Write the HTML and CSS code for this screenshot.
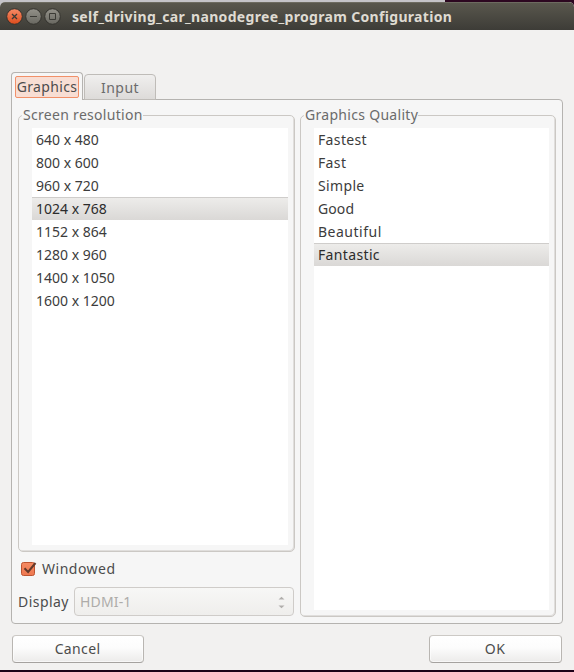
FILE: index.html
```html
<!DOCTYPE html>
<html lang="en">
<head>
<meta charset="utf-8">
<title>self_driving_car_nanodegree_program Configuration</title>
<link rel="stylesheet" href="styles.css">
</head>
<body>
<div class="desktop">
<main class="window">
  <header class="titlebar">
    <svg class="controls" width="56" height="18" viewBox="0 0 56 18">
      <defs>
        <linearGradient id="close" x2="0" y2="1"><stop stop-color="#f78c68"/><stop offset="1" stop-color="#dc4b1b"/></linearGradient>
        <linearGradient id="gray" x2="0" y2="1"><stop stop-color="#94928a"/><stop offset="1" stop-color="#686760"/></linearGradient>
      </defs>
      <g stroke="#34332e">
        <circle cx="8.5" cy="8.5" r="7.8" fill="url(#close)"/>
        <circle cx="27.5" cy="8.5" r="7.8" fill="url(#gray)"/>
        <circle cx="46.5" cy="8.5" r="7.8" fill="url(#gray)"/>
      </g>
      <g fill="none" stroke="#3b3a35">
        <path d="M6 6l5 5M11 6l-5 5" stroke-width="1.3"/>
        <path d="M24 8.5h7M43.5 5.5h6v6h-6z"/>
      </g>
    </svg>
    <h1 class="title">self_driving_car_nanodegree_program Configuration</h1>
  </header>
  <nav class="tabs">
    <div class="tab active"><span class="focus">Graphics</span></div>
    <div class="tab">Input</div>
  </nav>
  <section class="panel">
    <div class="column">
      <div class="group">
        <h2 class="legend">Screen resolution</h2>
        <ul class="list">
          <li>640 x 480</li><li>800 x 600</li><li>960 x 720</li><li class="selected">1024 x 768</li>
          <li>1152 x 864</li><li>1280 x 960</li><li>1400 x 1050</li><li>1600 x 1200</li>
        </ul>
      </div>
      <label class="check">
        <svg width="18" height="18" viewBox="0 0 18 18">
          <defs><linearGradient id="box" x2="0" y2="1"><stop stop-color="#f58a62"/><stop offset="1" stop-color="#ee7850"/></linearGradient></defs>
          <rect x="1.5" y="2.5" width="13" height="13" rx="2" fill="url(#box)" stroke="#bd5431"/>
          <path d="M4.5 8.2l3.6 3.7L15.5 3" fill="none" stroke="#63392b" stroke-width="2"/>
        </svg>
        <span class="check-label">Windowed</span>
      </label>
      <div class="display">
        <span class="display-label">Display</span>
        <div class="combo"><span>HDMI-1</span>
          <svg width="7" height="13" viewBox="0 0 7 13"><path d="M.5 3.5l3-2.8 3 2.8zM.5 9.5h6l-3 2.8z" fill="#b0aeab"/></svg>
        </div>
      </div>
    </div>
    <div class="group quality">
      <h2 class="legend">Graphics Quality</h2>
      <ul class="list words">
        <li>Fastest</li><li>Fast</li><li>Simple</li><li class="tight">Good</li><li class="loose">Beautiful</li><li class="selected">Fantastic</li>
      </ul>
    </div>
  </section>
  <footer class="actions">
    <button class="button">Cancel</button>
    <button class="button ok">OK</button>
  </footer>
</main>
</div>
</body>
</html>
```

FILE: styles.css
```css
* { box-sizing: border-box; }
body { margin: 0; font: 14px/20px "Noto Sans", "Open Sans", sans-serif; color: #4c4c4c; }
h1, h2, ul { margin: 0; padding: 0; font-weight: normal; font-size: inherit; list-style: none; }
span, li, h1 { white-space: nowrap; }
.desktop { height: 672px; padding: 2px 0; overflow: hidden; background: linear-gradient(#1d0018, #1d0018) 0 100% / 100% 2px no-repeat, linear-gradient(90deg, #c5c4c8 445px, #2c0720 445px); }
.window { height: 668px; border-radius: 5px 5px 0 0; background: #f2f1f0; overflow: hidden; }
.titlebar { height: 28px; padding-left: 6px; display: flex; align-items: center; background: linear-gradient(#59574d, #3d3c37); border-top: 1px solid #6d6b60; }
.controls { flex: none; margin-top: 1px; }
.title { margin-left: 10px; font-size: 14px; font-weight: bold; color: #dfdbd2; line-height: 20px; margin-top: 1px; letter-spacing: .325px; }
.tabs { display: flex; align-items: flex-end; height: 28px; margin: 42px 0 0 11px; }
.tab { width: 72px; height: 26px; border: 1px solid #bfbcb8; border-radius: 4px 4px 0 0; background: linear-gradient(#f0efee, #dddbd9); color: #6b6b6b; display: flex; justify-content: center; align-items: center; padding-top: 2px; letter-spacing: .5px; }
.tab.active { width: 72px; height: 28px; padding-top: 0; border-color: #b5b3b0; border-bottom: 0; background: #f6f6f6; color: #4c4c4c; margin-right: 1px; letter-spacing: .33px; position: relative; }
.focus { width: 64px; height: 22px; border: 1px solid #f19069; border-radius: 2px; background: #f8ded4; display: flex; justify-content: center; align-items: center; }
.panel { width: 552px; height: 525px; margin: -1px 0 0 11px; padding: 15px 6px 6px; border: 1px solid #b5b3b0; border-radius: 0 4px 4px 4px; background: #f6f6f6; display: flex; gap: 5px; }
.column { width: 277px; }
.group { height: 437px; border: 1px solid #cbc8c4; border-radius: 5px; padding: 0 6px 6px 13px; box-shadow: inset -1px -1px #e0dedc; }
.quality { width: 256px; height: 502px; }
.legend { width: max-content; height: 20px; margin: -11px 0 0 -10px; padding: 0 0 0 1px; background: #f6f6f6; color: #6b6b6b; letter-spacing: .3px; }
.list { height: 417px; margin-top: 3px; background: #fff; color: #3c3c3c; }
.quality .list { height: 482px; }
.list li { height: 23px; padding: 2px 0 0 4px; line-height: 20px; }
.list .selected { padding-top: 1px; border-top: 1px solid #cfcdcb; background: linear-gradient(#edecea, #dad8d6); color: #2c2c2c; }
.words { letter-spacing: .35px; }
.words .tight { letter-spacing: .1px; }
.words .loose { letter-spacing: .5px; }
.check { display: flex; align-items: center; gap: 4px; height: 20px; margin: 7px 0 0 2px; }
.check-label { letter-spacing: .5px; }
.display { display: flex; align-items: center; margin-top: 8px; height: 29px; }
.display-label { width: 56px; letter-spacing: .45px; }
.combo { width: 220px; height: 29px; padding: 0 8px 0 5px; border: 1px solid #cfccc9; border-radius: 4px; background: linear-gradient(#f7f7f6, #efeeec); color: #aeaca9; display: flex; align-items: center; justify-content: space-between; letter-spacing: .15px; }
.combo svg { margin-top: 2px; }
.actions { width: 550px; margin: 11px 0 0 12px; display: flex; justify-content: space-between; }
.button { width: 132px; height: 28px; padding: 0 1px 0 0; border: 1px solid #b9b6b2; border-top-color: #ccc9c5; border-bottom-color: #a5a29f; border-radius: 4px; background: linear-gradient(#fff, #fcfcfc 45%, #ecebea); box-shadow: inset 0 0 0 1px rgba(255,255,255,.6); font: inherit; color: #4c4c4c; letter-spacing: .35px; }
.ok { width: 133px; }
```
